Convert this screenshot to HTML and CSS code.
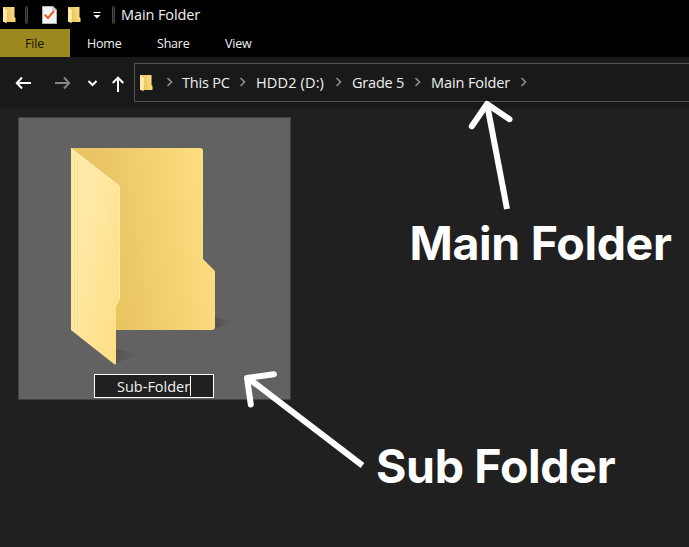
FILE: index.html
```html
<!DOCTYPE html>
<html lang="en">
<head>
<meta charset="utf-8">
<title>Main Folder</title>
<link rel="stylesheet" href="styles.css">
</head>
<body>
<svg class="defs" width="0" height="0" aria-hidden="true">
  <defs>
    <linearGradient id="back" x1="0" y1="0.4" x2="1" y2="0.2"><stop offset="0.25" stop-color="#e9c563"/><stop offset="1" stop-color="#ffe084"/></linearGradient>
    <linearGradient id="flap" x1="0" y1="0" x2="1" y2="1"><stop offset="0.3" stop-color="#ffe9a6"/><stop offset="1" stop-color="#ffdd82"/></linearGradient>
    <symbol id="mini" viewBox="0 0 13 18"><path d="M0 1H11.5V11L12.5 12V16H0Z" fill="url(#back)"/><path d="M0 1L4 4V13L3.500 14V17.500L0 15Z" fill="#ffe9a9"/></symbol>
    <symbol id="sep" viewBox="0 0 8 10"><path d="M1.500 1L5.500 5L1.500 9" fill="none" stroke="#8b8b8b" stroke-width="1.700"/></symbol>
  </defs>
</svg>
<div class="window">
  <header class="titlebar">
    <svg class="mini" width="13" height="18"><use href="#mini"/></svg>
    <i class="divider first"></i>
    <svg class="check" width="15" height="18" viewBox="0 0 15 18"><path d="M.5.500H11L14.500 4V17.500H.5Z" fill="#f4f4f5" stroke="#aeb3b8"/><path d="M11 .5V4H14.500" fill="#d9dcde" stroke="#aeb3b8"/><path d="M2.800 8.800L6 12L12 5" fill="none" stroke="#f05a1c" stroke-width="2"/></svg>
    <svg class="mini second" width="13" height="18"><use href="#mini"/></svg>
    <svg class="drop" width="8" height="7" viewBox="0 0 8 7"><path d="M.5.500H7.500" stroke="#fff"/><path d="M.5 3H7.500L4 6.500Z" fill="#fff"/></svg>
    <i class="divider"></i>
    <span class="title">Main Folder</span>
  </header>
  <nav class="tabs">
    <span class="file">File</span><span class="home">Home</span><span class="share">Share</span><span class="view">View</span>
  </nav>
  <div class="navbar">
    <svg class="controls" width="134" height="52" viewBox="0 0 134 52" fill="none" stroke="#fff" stroke-width="2">
      <path d="M17 26H31M22 20.500L16.800 26L22 31.500"/>
      <path d="M55 26H69M64 20.500L69.200 26L64 31.500" stroke="#858585"/>
      <path d="M88.500 24L92.500 28L96.500 24"/>
      <path d="M118 35V21M112.700 26L118 20.700L123.300 26"/>
    </svg>
    <div class="address">
      <svg class="mini" width="13" height="18"><use href="#mini"/></svg>
      <svg class="sep" width="8" height="10"><use href="#sep"/></svg><span class="pc">This PC</span>
      <svg class="sep" width="8" height="10"><use href="#sep"/></svg><span class="drive">HDD2 (D:)</span>
      <svg class="sep" width="8" height="10"><use href="#sep"/></svg><span class="grade">Grade 5</span>
      <svg class="sep" width="8" height="10"><use href="#sep"/></svg><span class="main">Main Folder</span>
      <svg class="sep" width="8" height="10"><use href="#sep"/></svg>
    </div>
  </div>
  <main class="files">
    <div class="tile">
      <svg class="folder" width="190" height="224" viewBox="66 142 190 224">
        <defs>
          <linearGradient id="shade"><stop offset="0" stop-color="#333" stop-opacity=".3"/><stop offset="1" stop-color="#333" stop-opacity="0"/></linearGradient>
        </defs>
        <path d="M215 317L235 321L215 329Z" fill="url(#shade)"/>
        <path d="M116 349L139 354L116 363Z" fill="url(#shade)"/>
        <path d="M71 148H200Q203 148 203 151V259L215 271V327Q215 330 212 330H71Z" fill="url(#back)"/>
        <path d="M71 148L118 184.500Q120 186 120 189V299L116 307V363Q116 365.500 114 364L71 330Z" fill="url(#flap)"/>
        <path d="M71.500 149L118 185Q119.500 186 119.500 189V299" fill="none" stroke="#ffedb5"/>
        <path d="M74.500 156V327M77.500 159V329" stroke="#fddd88"/>
        <path d="M75.500 157V328M78.500 160V330" stroke="#ffecb0"/>
      </svg>
      <div class="rename"><span>Sub-Folder</span><i class="caret"></i></div>
    </div>
  </main>
  <svg class="arrows" width="689" height="547" viewBox="0 0 689 547" fill="none" stroke="#fff" stroke-width="6" stroke-linejoin="round">
    <path d="M507 209L487 104"/>
    <path d="M471.800 126.200L487 104L509.500 119.200" stroke-linecap="round"/>
    <path d="M362.500 465.500L248 378"/>
    <path d="M250.800 404.500L247 378L274 374.200" stroke-linecap="round"/>
  </svg>
  <span class="label upper">Main Folder</span>
  <span class="label lower">Sub Folder</span>
</div>
</body>
</html>
```
FILE: styles.css
```css
body { margin: 0; background: #202020; }
.defs { position: absolute; }
.window {
  position: relative;
  width: 689px;
  height: 547px;
  overflow: hidden;
  background: #202020;
  color: #f1f1f1;
  font-family: "Open Sans", "Noto Sans", sans-serif;
  white-space: nowrap;
}
svg { display: block; flex: none; }
.titlebar { display: flex; align-items: center; height: 29px; padding-left: 3px; background: #000; }
.divider { width: 1px; height: 16px; border: 1px solid #484848; border-radius: 2px; background: #222; }
.divider.first { margin-left: 9px; }
.check { margin-left: 14px; }
.second { margin-left: 11px; }
.drop { margin-left: 12px; margin-top: 2px; }
.divider:not(.first) { margin-left: 11px; }
.title { margin-left: 6px; font-size: 14.5px; letter-spacing: -0.1px; }
.tabs { display: flex; height: 28px; background: #000; font-size: 12.5px; line-height: 29px; letter-spacing: -0.2px; }
.file { width: 45px; padding-left: 25px; background: #9b881e; color: #161300; }
.home { width: 70px; padding-left: 17px; }
.share { width: 68px; }
.navbar { display: flex; align-items: flex-start; height: 52px; background: #191919; }
.address {
  box-sizing: border-box;
  display: flex;
  align-items: center;
  width: 560px;
  height: 39px;
  flex: none;
  margin-top: 6px;
  border: 1px solid #535353;
  padding-left: 5px;
  font-size: 14.5px;
  letter-spacing: -0.2px;
}
.address .sep { margin: 0 8px 2px 13px; }
.address .sep ~ .sep { margin-left: 7px; margin-right: 9px; }
.pc { width: 50px; }
.drive { width: 72px; letter-spacing: 0.15px; }
.grade { width: 55px; }
.main { width: 82px; letter-spacing: -0.1px; }
.files { padding: 8px 0 0 18px; }
.tile {
  box-sizing: border-box;
  width: 273px;
  height: 283px;
  border: 1px solid #414141;
  background: #626262;
  padding: 24px 0 0 47px;
}
.rename {
  box-sizing: border-box;
  display: flex;
  align-items: center;
  width: 120px;
  height: 24px;
  margin: 8px 0 0 28px;
  padding-left: 22px;
  border: 1px solid #fff;
  background: #202020;
  font-size: 14.5px;
  letter-spacing: 0;
}
.caret { width: 1px; height: 20px; background: #fff; }
.arrows { position: absolute; left: 0; top: 0; }
.label { position: absolute; font: 700 46.5px/56px Inter, sans-serif; letter-spacing: -0.35px; color: #fff; }
.upper { left: 409.5px; top: 215px; }
.lower { left: 376px; top: 438px; }
```
